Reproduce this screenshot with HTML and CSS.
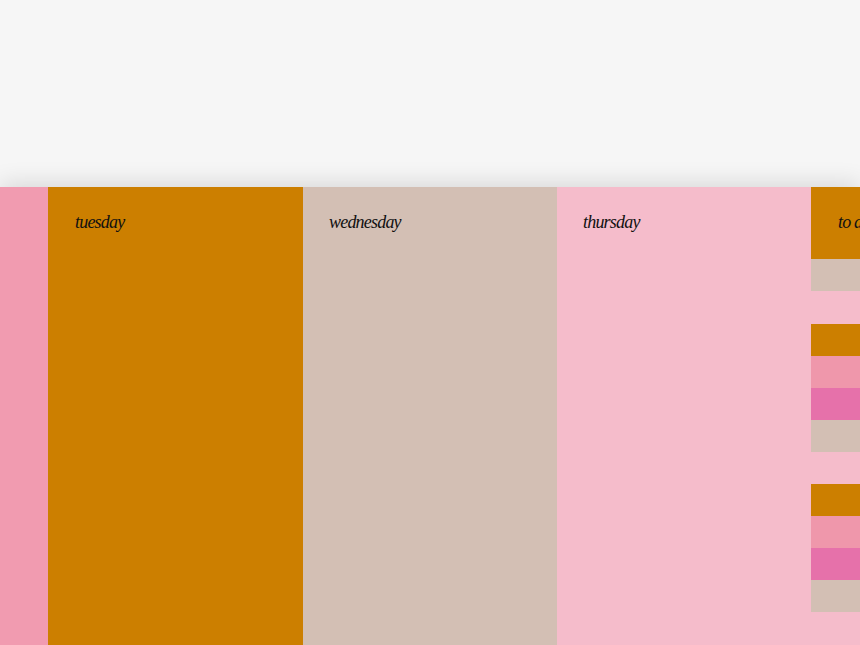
FILE: index.html
```html
<!DOCTYPE html>
<html>
<head>
<meta charset="utf-8">
<link rel="stylesheet" href="styles.css">
</head>
<body>
<div class="top"></div>
<div class="week">
  <div class="day monday"></div>
  <div class="day tuesday"><h2 class="title">tuesday</h2></div>
  <div class="day wednesday"><h2 class="title">wednesday</h2></div>
  <div class="day thursday"><h2 class="title">thursday</h2></div>
  <div class="todo">
    <div class="todo-head"><h2 class="title">to do</h2></div>
    <div class="row beige"></div>
    <div class="group">
      <div class="row orange"></div>
      <div class="row pink"></div>
      <div class="row magenta"></div>
      <div class="row beige"></div>
    </div>
    <div class="group">
      <div class="row orange"></div>
      <div class="row pink"></div>
      <div class="row magenta"></div>
      <div class="row beige"></div>
    </div>
  </div>
</div>
</body>
</html>
```

FILE: styles.css
```css
html, body {
  margin: 0;
  padding: 0;
  height: 100%;
  overflow: hidden;
  background: #f6f6f6;
}
body {
  display: flex;
  flex-direction: column;
  font-family: "Liberation Serif", serif;
}
.top {
  height: 187px;
  flex: none;
  background: #f6f6f6;
}
.week {
  flex: 1;
  display: flex;
  background: #f5bccb;
  box-shadow: 0 -4px 22px rgba(0,0,0,0.12);
  position: relative;
  z-index: 1;
}
.day {
  flex: none;
  width: 254px;
}
.monday { width: 48px; background: #f19bb0; }
.tuesday { width: 255px; background: #cc7f00; }
.wednesday { background: #d3bfb4; }
.thursday { background: #f5bccb; }
.title {
  margin: 0;
  padding: 24px 0 0 27px;
  font-size: 18px;
  letter-spacing: -0.8px;
  font-style: italic;
  font-weight: normal;
  color: #111;
  white-space: nowrap;
  line-height: 22px;
}
.wednesday .title, .thursday .title { padding-left: 26px; }
.todo {
  flex: 1;
  overflow: hidden;
  display: flex;
  flex-direction: column;
}
.todo-head {
  height: 72px;
  background: #cc7f00;
}
.group {
  margin-top: 33px;
  display: flex;
  flex-direction: column;
}
.group + .group { margin-top: 32px; }
.row { height: 32px; }
.orange { background: #cc7f00; }
.pink { background: #ef97ab; }
.magenta { background: #e671aa; }
.beige { background: #d3bfb4; }
```
